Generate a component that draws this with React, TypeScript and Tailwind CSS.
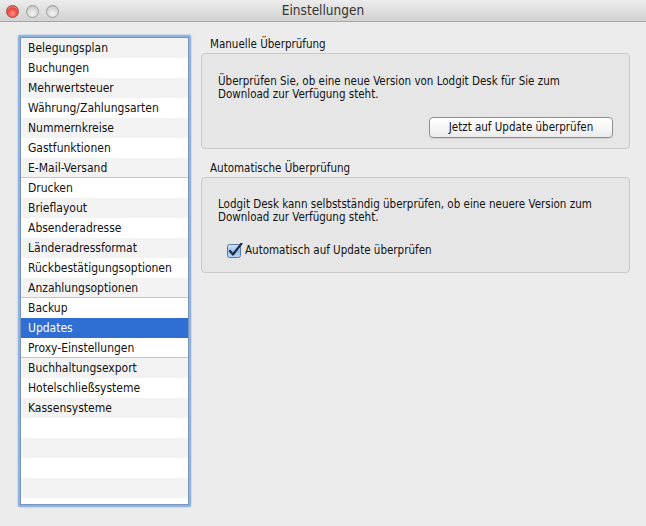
import React from "react";

const items = [
  "Belegungsplan",
  "Buchungen",
  "Mehrwertsteuer",
  "Währung/Zahlungsarten",
  "Nummernkreise",
  "Gastfunktionen",
  "E-Mail-Versand",
  "Drucken",
  "Brieflayout",
  "Absenderadresse",
  "Länderadressformat",
  "Rückbestätigungsoptionen",
  "Anzahlungsoptionen",
  "Backup",
  "Updates",
  "Proxy-Einstellungen",
  "Buchhaltungsexport",
  "Hotelschließsysteme",
  "Kassensysteme",
];

// rows after which a thin separator line is drawn
const separators = new Set(["E-Mail-Versand", "Anzahlungsoptionen", "Proxy-Einstellungen"]);

function TrafficLight({ red }: { red?: boolean }) {
  return red ? (
    <div className="w-[13px] h-[13px] rounded-full border border-[#a8453f] bg-[radial-gradient(circle_at_50%_70%,#ff8f84_0%,#e8463c_55%,#b8251d_100%)] shadow-[inset_0_1px_1px_rgba(255,255,255,0.5)]" />
  ) : (
    <div className="w-[13px] h-[13px] rounded-full border border-[#9c9c9c] bg-[radial-gradient(circle_at_50%_70%,#f4f4f4_0%,#d6d6d6_60%,#b4b4b4_100%)]" />
  );
}

export default function App() {
  return (
    <div
      className="w-[646px] h-[526px] bg-[#ececec] flex flex-col overflow-hidden text-[12px] text-[#111]"
      style={{ fontFamily: '"DejaVu Sans Condensed", "DejaVu Sans", sans-serif', fontStretch: "condensed" }}
    >
      {/* title bar */}
      <div className="h-[22px] shrink-0 relative flex items-center justify-center bg-gradient-to-b from-[#ececec] to-[#d2d2d2] border-b border-[#a5a5a5]">
        <div className="absolute left-[6px] top-[5px] flex gap-[7px]">
          <TrafficLight red />
          <TrafficLight />
          <TrafficLight />
        </div>
        <span className="text-[13.5px] text-[#333]">Einstellungen</span>
      </div>

      <div className="flex flex-1 min-h-0 pt-[13px] pb-[19px]">
        {/* list */}
        <div className="ml-[18px] w-[173px] rounded-[2px] border-[2px] border-[#8db2e3] shadow-[0_0_2px_#8db2e3] bg-white flex flex-col overflow-hidden">
          <div className="border border-[#7b95b9] flex-1 min-h-0 flex flex-col overflow-hidden">
            {items.map((it, i) => {
              const selected = it === "Updates";
              return (
                <div
                  key={it}
                  className={
                    "h-[20px] shrink-0 pl-[7px] flex items-center leading-none " +
                    (selected
                      ? "bg-[#2f6ed3] text-white"
                      : i % 2 === 0
                      ? "bg-[#f3f3f3]"
                      : "bg-white") +
                    (separators.has(it) ? " border-b border-[#c6c6c6]" : "")
                  }
                >
                  {it}
                </div>
              );
            })}
            {[0, 1, 2, 3].map((k) => (
              <div
                key={k}
                className={"h-[20px] shrink-0 " + (k % 2 === 0 ? "bg-white" : "bg-[#f3f3f3]")}
              />
            ))}
          </div>
        </div>

        {/* right pane */}
        <div className="flex-1 flex flex-col pl-[10px] pr-[16px]">
          <div className="pl-[9px] text-[11.5px] leading-none h-[18px] flex items-center pt-[2px]">Manuelle Überprüfung</div>
          <div className="h-[96px] rounded-[4px] border border-[#c9c9c9] bg-[#e6e6e6] flex flex-col pl-[16px] pr-[10px] pt-[21px]">
            <p className="leading-[13px] text-[11.5px]">
              Überprüfen Sie, ob eine neue Version von Lodgit Desk für Sie zum
              <br />
              Download zur Verfügung steht.
            </p>
            <div className="flex justify-end mt-[16px] pr-[6px]">
              <button className="w-[184px] h-[21px] rounded-[4px] border border-[#8f8f8f] bg-gradient-to-b from-[#ffffff] to-[#ececec] text-[11.5px] leading-none shadow-[0_1px_0_rgba(0,0,0,0.08)]">
                Jetzt auf Update überprüfen
              </button>
            </div>
          </div>

          <div className="mt-[10px] pl-[9px] text-[11.5px] leading-none h-[18px] flex items-center pt-[2px]">Automatische Überprüfung</div>
          <div className="h-[96px] rounded-[4px] border border-[#c9c9c9] bg-[#e6e6e6] flex flex-col pl-[16px] pr-[10px] pt-[20px]">
            <p className="leading-[13px] text-[11.5px]">
              Lodgit Desk kann selbstständig überprüfen, ob eine neuere Version zum
              <br />
              Download zur Verfügung steht.
            </p>
            <label className="flex items-center mt-[18px] ml-[9px] gap-[2px] text-[11.5px]">
              <svg width="16" height="15" viewBox="0 0 16 15">
                <defs>
                  <linearGradient id="cb" x1="0" y1="0" x2="0" y2="1">
                    <stop offset="0" stopColor="#d7e6f8" />
                    <stop offset="0.5" stopColor="#9cc0ea" />
                    <stop offset="1" stopColor="#b9d4f3" />
                  </linearGradient>
                </defs>
                <rect x="0.5" y="1.5" width="13" height="13" rx="2" fill="url(#cb)" stroke="#5a7aa6" />
                <path d="M3 8 L6 11.5 L14.5 0.5" fill="none" stroke="#1c2a44" strokeWidth="2.2" strokeLinecap="round" strokeLinejoin="round" />
              </svg>
              <span>Automatisch auf Update überprüfen</span>
            </label>
          </div>
        </div>
      </div>
    </div>
  );
}
